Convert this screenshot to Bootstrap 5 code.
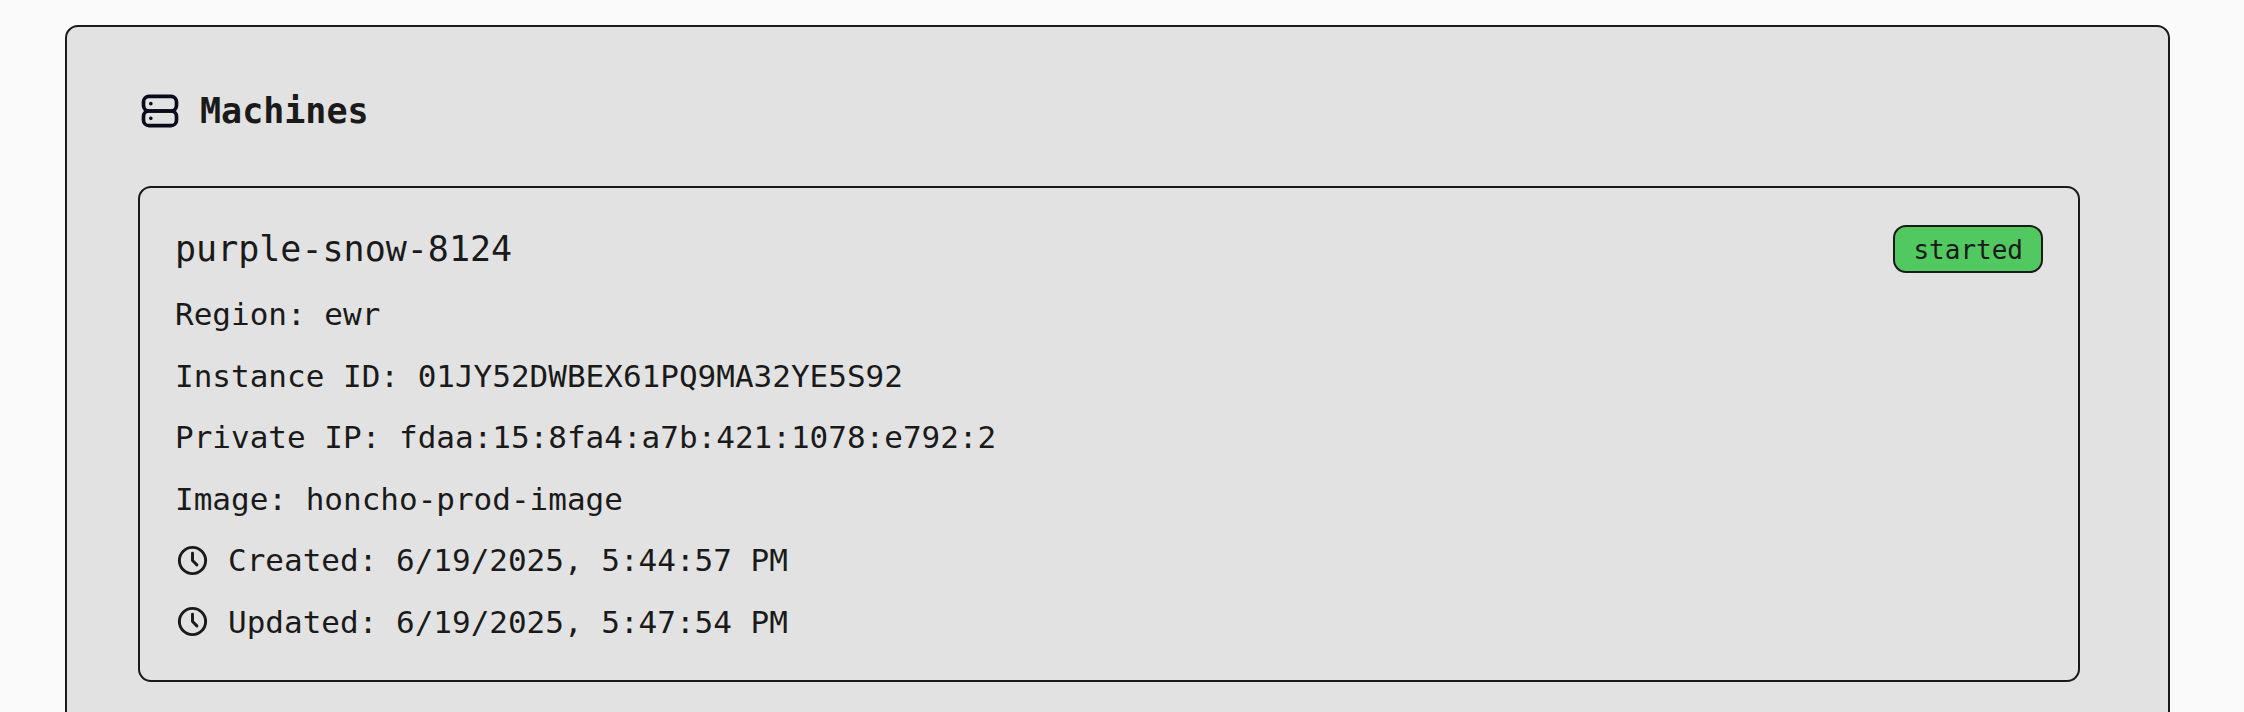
<!DOCTYPE html>
<html lang="en">
<head>
<meta charset="utf-8">
<meta name="viewport" content="width=device-width, initial-scale=1">
<title>Machines</title>
<link href="https://cdn.jsdelivr.net/npm/bootstrap@5.3.0/dist/css/bootstrap.min.css" rel="stylesheet">
<style>
  :root { --ink: #1a1a1a; --panel: #e2e2e2; }
  body {
    background: #fafafa;
    color: var(--ink);
    font-family: Menlo, "DejaVu Sans Mono", monospace;
    font-size: 31px;
    line-height: 44px;
    height: 100vh;
    overflow: hidden;
  }
  .page { padding: 25px 74px 0 65px; }
  .panel, .machine {
    background: var(--panel);
    color: var(--ink);
    border: 2px solid var(--ink);
    border-radius: 13px;
  }
  .panel { padding: 58px 88px 58px 71px; }
  .panel-head { gap: 18px; margin-bottom: 49px; }
  .panel-title, .machine-name { font-size: 35px; line-height: 52px; }
  .panel-icon { width: 44px; height: 44px; color: #0a0a1a; }
  .machine { padding: 35px 35px 36px; min-height: 496px; gap: 17px; }
  .status {
    background: #51c860;
    color: var(--ink);
    border: 2px solid var(--ink);
    border-radius: 13px;
    font-size: 26px;
    line-height: 42px;
    padding: 2px 18px 0;
  }
  .stamp { gap: 18px; }
  .stamp-icon { width: 35px; height: 35px; }
</style>
</head>
<body>
<svg class="d-none" aria-hidden="true">
  <symbol id="clock" viewBox="0 0 24 24" fill="none" stroke="currentColor" stroke-width="2" stroke-linecap="round" stroke-linejoin="round">
    <circle cx="12" cy="12" r="9"/><path d="M12 7v5l3 3"/>
  </symbol>
</svg>
<main class="page">
  <section class="panel">
    <div class="panel-head d-flex align-items-center">
      <svg class="panel-icon flex-shrink-0" viewBox="0 0 24 24" fill="none" stroke="currentColor" stroke-width="2" stroke-linecap="round" stroke-linejoin="round" aria-hidden="true">
        <rect x="3" y="4" width="18" height="8" rx="3"/><rect x="3" y="12" width="18" height="8" rx="3"/><path d="M7 8v.01M7 16v.01"/>
      </svg>
      <h2 class="panel-title fw-bold m-0">Machines</h2>
    </div>
    <article class="machine d-flex flex-column">
      <div class="d-flex align-items-center justify-content-between">
        <h3 class="machine-name fw-normal m-0">purple-snow-8124</h3>
        <span class="status">started</span>
      </div>
      <ul class="list-unstyled m-0 d-flex flex-column flex-grow-1 justify-content-between">
        <li>Region: ewr</li>
        <li>Instance ID: 01JY52DWBEX61PQ9MA32YE5S92</li>
        <li>Private IP: fdaa:15:8fa4:a7b:421:1078:e792:2</li>
        <li>Image: honcho-prod-image</li>
        <li class="stamp d-flex align-items-center"><svg class="stamp-icon flex-shrink-0" aria-hidden="true"><use href="#clock"/></svg><span>Created: 6/19/2025, 5:44:57 PM</span></li>
        <li class="stamp d-flex align-items-center"><svg class="stamp-icon flex-shrink-0" aria-hidden="true"><use href="#clock"/></svg><span>Updated: 6/19/2025, 5:47:54 PM</span></li>
      </ul>
    </article>
  </section>
</main>
<script src="https://cdn.jsdelivr.net/npm/bootstrap@5.3.0/dist/js/bootstrap.bundle.min.js"></script>
</body>
</html>
